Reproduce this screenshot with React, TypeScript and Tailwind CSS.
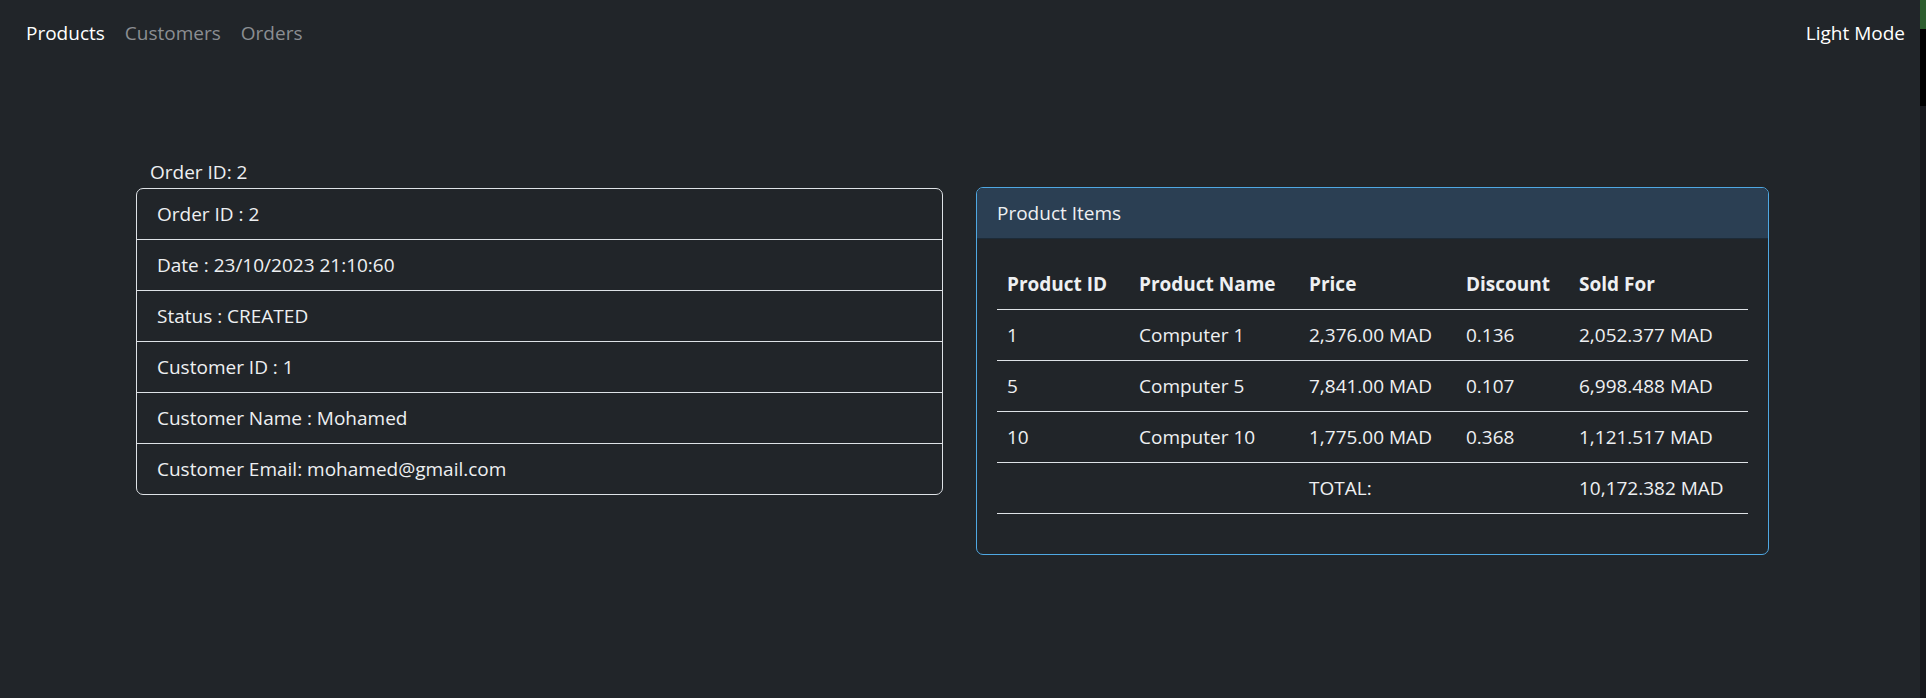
import React from 'react';

type Item = {
  id: number;
  name: string;
  price: string;
  discount: string;
  soldFor: string;
};

const order = {
  id: 2,
  date: '23/10/2023 21:10:60',
  status: 'CREATED',
  customerId: 1,
  customerName: 'Mohamed',
  customerEmail: 'mohamed@gmail.com',
};

const items: Item[] = [
  { id: 1, name: 'Computer 1', price: '2,376.00 MAD', discount: '0.136', soldFor: '2,052.377 MAD' },
  { id: 5, name: 'Computer 5', price: '7,841.00 MAD', discount: '0.107', soldFor: '6,998.488 MAD' },
  { id: 10, name: 'Computer 10', price: '1,775.00 MAD', discount: '0.368', soldFor: '1,121.517 MAD' },
];

const font = { fontFamily: '"Open Sans", "Noto Sans", sans-serif' };

const Navbar: React.FC = () => (
  <nav className="flex h-[66px] items-center justify-between pl-[16px] pr-[15px]">
    <div className="flex items-center">
      <a className="px-[10px] text-white">Products</a>
      <a className="px-[10px] text-[#8b8e92]">Customers</a>
      <a className="px-[10px] text-[#8b8e92]">Orders</a>
    </div>
    <a className="text-white">Light Mode</a>
  </nav>
);

const OrderDetails: React.FC = () => {
  const rows = [
    `Order ID : ${order.id}`,
    `Date : ${order.date}`,
    `Status : ${order.status}`,
    `Customer ID : ${order.customerId}`,
    `Customer Name : ${order.customerName}`,
    `Customer Email: ${order.customerEmail}`,
  ];
  return (
    <div className="flex w-[807px] flex-col">
      <div className="pl-[14px] leading-[30px]">Order ID: {order.id}</div>
      <ul className="mt-[1px] rounded-[7px] border border-[#dee2e6]">
        {rows.map((r, i) => (
          <li
            key={r}
            className={`px-[20px] py-[10px] leading-[30px] ${i > 0 ? 'border-t border-[#dee2e6]' : ''}`}
          >
            {r}
          </li>
        ))}
      </ul>
    </div>
  );
};

const cell = 'px-[10px] py-[10px] leading-[30px]';

const ProductItems: React.FC = () => (
  <div className="mt-[30px] w-[793px] overflow-hidden rounded-[7px] border border-[#4fa8e3]">
    <div className="border-b border-[#1d2b38] bg-[#2b3f53] px-[20px] py-[10px] leading-[30px]">
      Product Items
    </div>
    <div className="p-[20px]">
      <table className="mb-[20px] w-full border-collapse text-left">
        <thead>
          <tr className="border-b border-[#dee2e6]">
            <th className={`w-[132px] font-bold ${cell}`}>Product ID</th>
            <th className={`w-[170px] font-bold ${cell}`}>Product Name</th>
            <th className={`w-[157px] font-bold ${cell}`}>Price</th>
            <th className={`w-[113px] font-bold ${cell}`}>Discount</th>
            <th className={`font-bold ${cell}`}>Sold For</th>
          </tr>
        </thead>
        <tbody>
          {items.map((it) => (
            <tr key={it.id} className="border-b border-[#dee2e6]">
              <td className={cell}>{it.id}</td>
              <td className={cell}>{it.name}</td>
              <td className={cell}>{it.price}</td>
              <td className={cell}>{it.discount}</td>
              <td className={cell}>{it.soldFor}</td>
            </tr>
          ))}
          <tr className="border-b border-[#dee2e6]">
            <td className={cell}></td>
            <td className={cell}></td>
            <td className={cell}>TOTAL:</td>
            <td className={cell}></td>
            <td className={cell}>10,172.382 MAD</td>
          </tr>
        </tbody>
      </table>
    </div>
  </div>
);

export default function App() {
  return (
    <div className="flex h-[698px] w-full bg-[#212529] text-[19px] text-[#eef0f2]" style={font}>
      <div className="flex-1">
        <Navbar />
        <div className="mt-[91px] flex items-start gap-[33px] pl-[136px]">
          <OrderDetails />
          <ProductItems />
        </div>
      </div>
      <div className="flex w-[6px] flex-col">
        <div className="h-[29px] bg-[#2c5e2e]"></div>
        <div className="h-[77px] bg-black"></div>
        <div className="flex-1 bg-[#17181d]"></div>
      </div>
    </div>
  );
}
